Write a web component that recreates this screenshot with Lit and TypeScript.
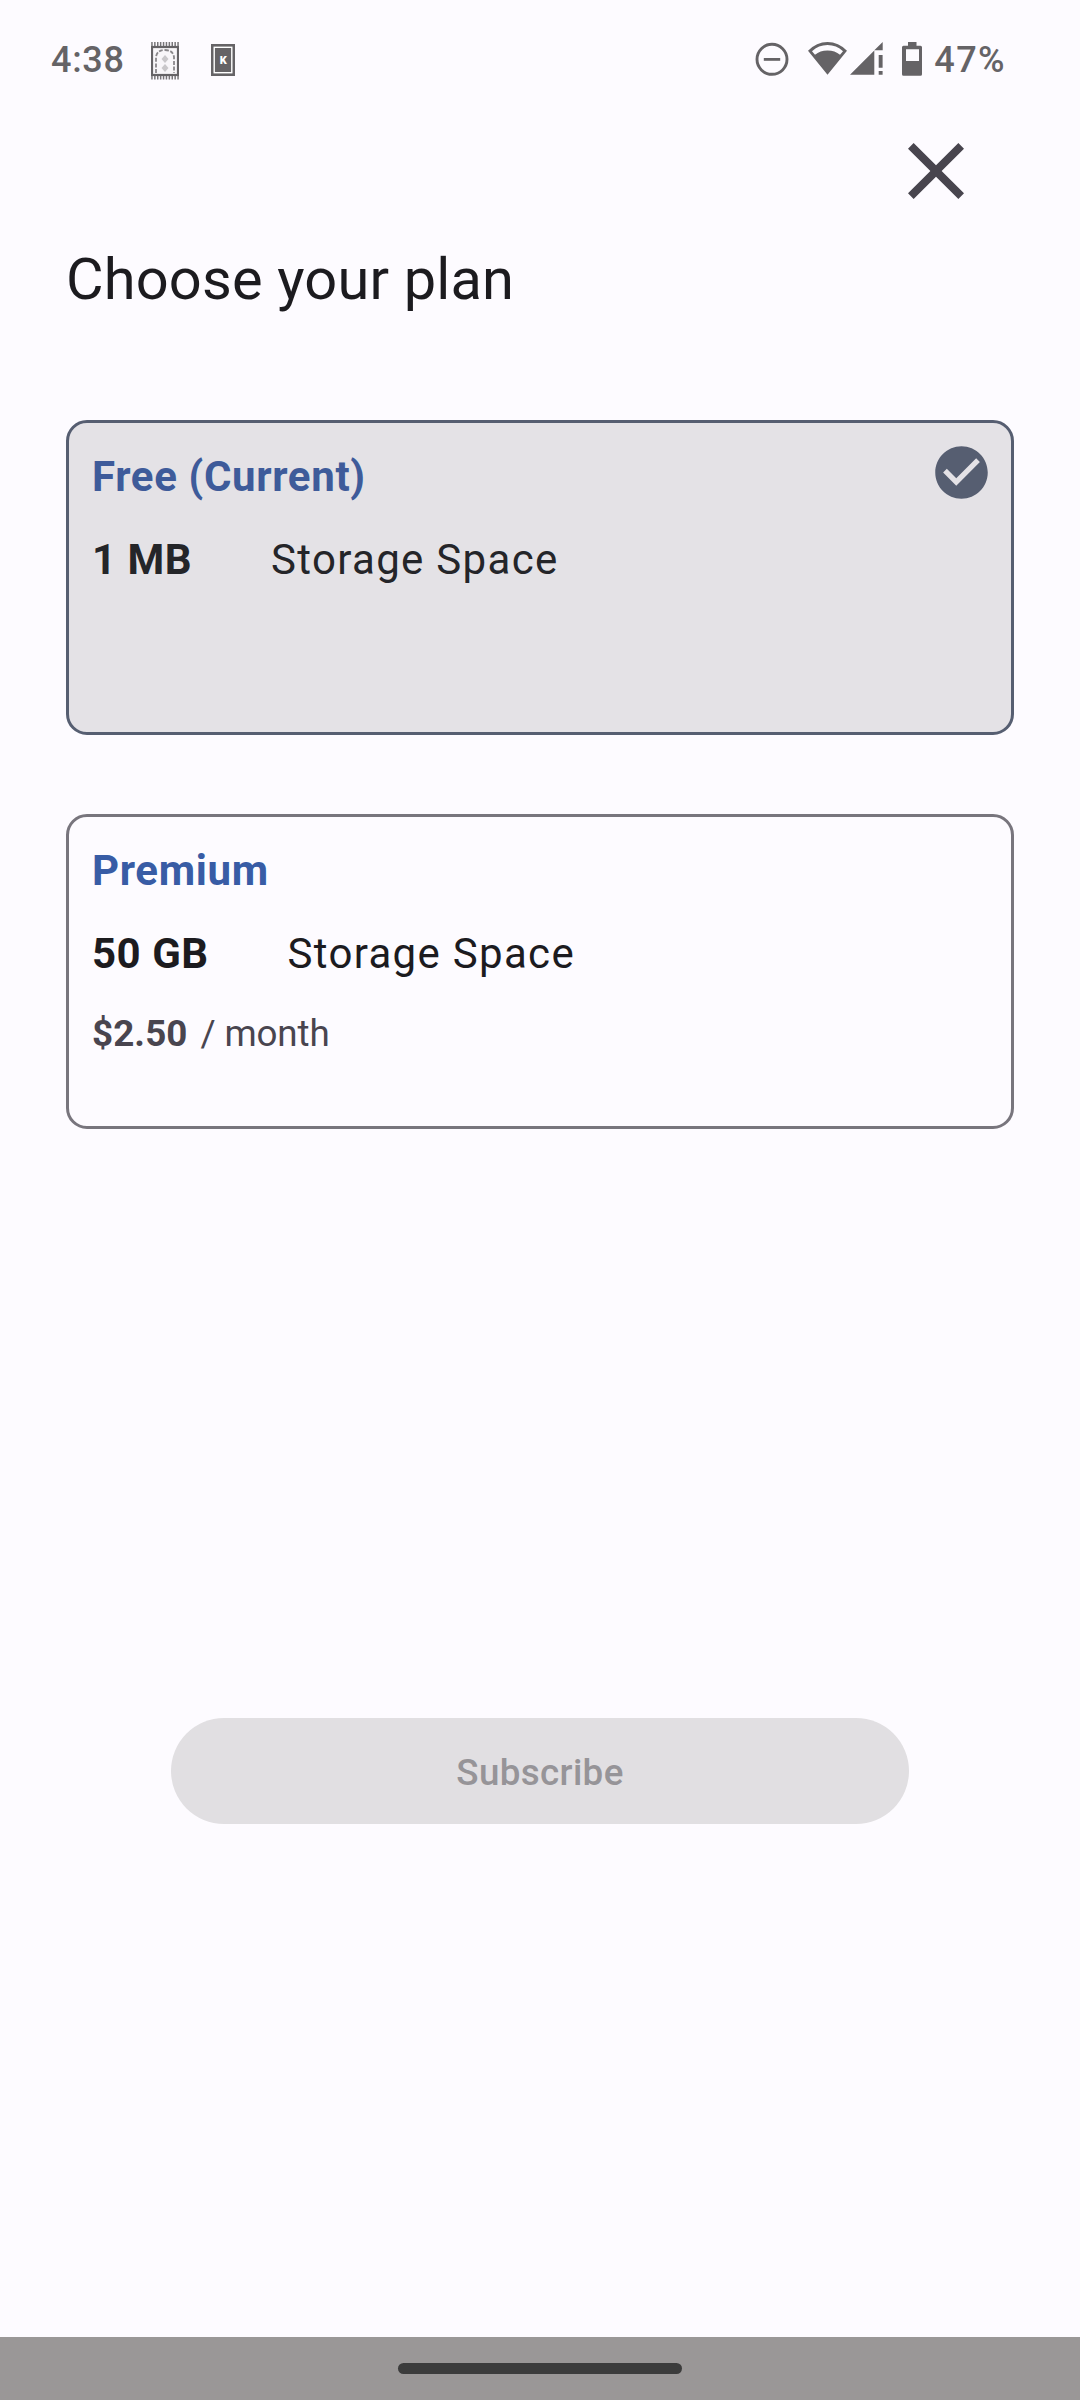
import { LitElement, html, css, svg, nothing } from "lit";
import { customElement, property } from "lit/decorators.js";

const fringe = (y: number) =>
  Array.from({ length: 10 }, (_, i) => svg`<rect x=${0.2 + i * 2.9} y=${y} width="1.5" height="4" fill="#777578"/>`);

@customElement("status-bar")
class StatusBar extends LitElement {
  static styles = css`
    :host {
      display: flex;
      align-items: flex-start;
      height: 116px;
      padding: 40px 74px 0 51px;
      box-sizing: border-box;
      color: #656366;
      font: 500 36px/40px Roboto, sans-serif;
    }
    svg { display: block; flex: none; fill: #656366; }
    .time { width: 100px; letter-spacing: 0.7px; }
    .spacer { flex: 1; }
    .card { margin: 4px 0 0 32px; }
    .rug { margin-top: 1.5px; }
    .dnd { margin: 2px 19px 0 0; }
    .wifi { margin: 2px 3px 0 0; }
    .signal { margin: 2px 19px 0 0; }
    .battery { margin: 2px 12px 0 0; }
    .percent { letter-spacing: 1.4px; white-space: nowrap; }
    .letter { font: 900 11px Roboto, sans-serif; fill: #fff; }
  `;
  render() {
    return html`
      <span class="time">4:38</span>
      <svg class="rug" width="28" height="38" viewBox="0 0 28 38">
        ${fringe(0)}${fringe(33.5)}
        <rect x="1" y="5" width="26" height="28" fill="#f8f6f9" stroke="#656366" stroke-width="2.2"/>
        <path d="M5 31V15Q6 8 14 8Q22 8 23 15V31" fill="none" stroke="#89878a" stroke-width="1.8" stroke-dasharray="4 1.6"/>
        <path d="M14 13l3.5 4-3.5 4-3.5-4zM14 22l3.5 4-3.5 4-3.5-4z" fill="#c9c7ca"/>
      </svg>
      <svg class="card" width="24" height="32" viewBox="0 0 24 32">
        <rect width="24" height="32"/>
        <rect x="3.2" y="3.3" width="17.6" height="25.4" fill="none" stroke="#fff" stroke-width="1.4"/>
        <text class="letter" x="12.2" y="19.8" text-anchor="middle">K</text>
      </svg>
      <span class="spacer"></span>
      <svg class="dnd" width="34" height="34" viewBox="0 0 34 34">
        <circle cx="17" cy="17.3" r="15" fill="none" stroke="#656366" stroke-width="2.9"/>
        <rect x="8.8" y="16" width="16.4" height="2.8"/>
      </svg>
      <svg class="wifi" width="39" height="33" viewBox="0 0 39 33">
        <path fill-rule="evenodd" d="M19.5 32.7L0 8.8Q8.5 0 19.5 0T39 8.8zM19.5 2.9Q10.5 2.9 4 9.2L7 12.8Q12 8.5 19.5 8.5T32 12.8L35 9.2Q28.5 2.9 19.5 2.9z"/>
      </svg>
      <svg class="signal" width="33" height="33" viewBox="0 0 33 33">
        <path d="M0 32.7L24.3 8.4V32.7zM24.3 8.3L32.7 0V8.3zM28.7 13h3.9v12.7h-3.9zM28.7 29h3.9v3.7h-3.9z"/>
      </svg>
      <svg class="battery" width="20" height="34" viewBox="0 0 20 34">
        <path fill-rule="evenodd" d="M6 0h8.5v3.7h4a1.5 1.5 0 0 1 1.5 1.5v27a1.5 1.5 0 0 1-1.5 1.5h-17a1.5 1.5 0 0 1-1.5-1.5v-27a1.5 1.5 0 0 1 1.5-1.5h4.5zM4 7.3v11.7h13v-11.7z"/>
      </svg>
      <span class="percent">47%</span>
    `;
  }
}

@customElement("plan-card")
class PlanCard extends LitElement {
  @property() name = "";
  @property() size = "";
  @property() price = "";
  @property({ type: Boolean, reflect: true }) selected = false;

  static styles = css`
    :host {
      display: block;
      position: relative;
      box-sizing: border-box;
      height: 315px;
      padding: 29px 23px 0;
      border: 3px solid #78757d;
      border-radius: 21px;
      font: 400 42px/50px Roboto, sans-serif;
      color: #1c1b1f;
      white-space: nowrap;
    }
    :host([selected]) { background: #e4e2e6; border-color: #565e71; color: #242529; }
    .name { color: #385ca5; font-weight: 700; letter-spacing: 0.65px; }
    :host([selected]) .name { color: #3e5b9a; }
    .storage { display: flex; gap: 79px; margin-top: 33px; }
    .amount { font-weight: 700; letter-spacing: 0.5px; }
    .label { letter-spacing: 1.31px; }
    .price { display: flex; gap: 13px; margin-top: 33px; font-size: 36.75px; line-height: 44px; color: #49454f; letter-spacing: -0.15px; }
    .value { font-weight: 700; letter-spacing: 0.1px; }
    .check { position: absolute; top: 18px; right: 18px; fill: #565e71; }
  `;
  render() {
    return html`
      <div class="name">${this.name}</div>
      <div class="storage"><span class="amount">${this.size}</span><span class="label">Storage Space</span></div>
      ${this.price
        ? html`<div class="price"><span class="value">${this.price}</span><span>/ month</span></div>`
        : nothing}
      ${this.selected
        ? html`<svg class="check" width="63" height="63" viewBox="0 0 24 24">
            <path d="M12 2C6.48 2 2 6.48 2 12s4.48 10 10 10 10-4.48 10-10S17.52 2 12 2zm-2 15l-5-5 1.41-1.41L10 14.17l7.59-7.59L19 8l-9 9z"/>
          </svg>`
        : nothing}
    `;
  }
}

@customElement("app-root")
class AppRoot extends LitElement {
  static styles = css`
    :host {
      display: flex;
      flex-direction: column;
      width: 1080px;
      height: 2400px;
      background: #fdfbff;
      font-family: Roboto, sans-serif;
      overflow: hidden;
    }
    .toolbar { display: flex; justify-content: flex-end; height: 126px; padding: 7px 96px 0 0; box-sizing: border-box; }
    .close { fill: #48454e; }
    h1 { margin: 0 66px; font-size: 57.75px; font-weight: 400; line-height: 74px; letter-spacing: 0.17px; color: #1c1b1f; white-space: nowrap; }
    .plans { display: flex; flex-direction: column; gap: 79px; padding: 104px 66px 0; }
    .subscribe {
      align-self: center;
      width: 738px;
      height: 106px;
      margin-top: 589px;
      padding: 3px 0 0;
      box-sizing: border-box;
      border: 0;
      border-radius: 53px;
      background: #e1dfe2;
      color: #969498;
      font: 500 36.75px/44px Roboto, sans-serif;
      letter-spacing: 0.36px;
    }
    .nav { display: flex; justify-content: center; margin-top: auto; height: 63px; padding-top: 26px; box-sizing: border-box; background: #9a9797; }
    .pill { width: 284px; height: 11px; border-radius: 5.5px; background: #3c3c3c; }
  `;
  render() {
    return html`
      <status-bar></status-bar>
      <div class="toolbar">
        <svg class="close" width="96" height="96" viewBox="0 0 24 24">
          <path d="M19 6.41L17.59 5 12 10.59 6.41 5 5 6.41 10.59 12 5 17.59 6.41 19 12 13.41 17.59 19 19 17.59 13.41 12z"/>
        </svg>
      </div>
      <h1>Choose your plan</h1>
      <div class="plans">
        <plan-card name="Free (Current)" size="1 MB" selected></plan-card>
        <plan-card name="Premium" size="50 GB" price="$2.50"></plan-card>
      </div>
      <button class="subscribe">Subscribe</button>
      <div class="nav"><div class="pill"></div></div>
    `;
  }
}
